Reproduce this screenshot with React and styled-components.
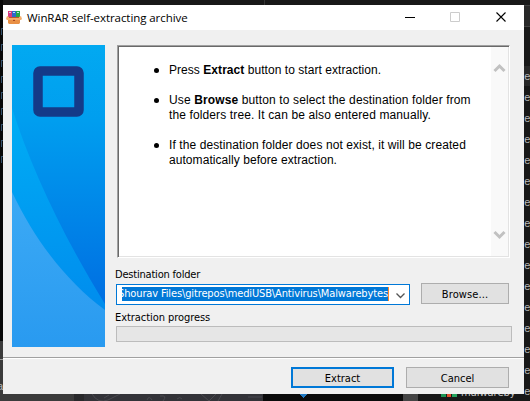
import React from 'react';
import styled, { createGlobalStyle } from 'styled-components';

const GlobalStyle = createGlobalStyle`
  * { box-sizing: border-box; }
  html, body { margin: 0; overflow: hidden; background: #181818; }
`;

const Desktop = styled.main`
  position: relative;
  width: 530px;
  height: 401px;
  overflow: hidden;
  padding: 5px 6px 7px 3px;
  background: #181818;
`;

const Backdrop = styled.svg`
  position: absolute;
  inset: 0;
`;

const Dialog = styled.section`
  position: relative;
  display: flex;
  flex-direction: column;
  width: 521px;
  height: 389px;
  background: #f0f0f0;
  color: #000;
  font: 11px/15px "DejaVu Sans Condensed", "Noto Sans", sans-serif;
`;

const TitleBar = styled.header`
  display: flex;
  align-items: center;
  height: 25px;
  padding-left: 3px;
  background: #fff;
`;

const Title = styled.h1`
  flex: 1;
  margin: 0 0 0 5px;
  font: 400 11.5px/24px "Open Sans", "Noto Sans", sans-serif;
  letter-spacing: ${(p) => p.$spacing}px;
  white-space: nowrap;
`;

const WindowControls = styled.svg`
  flex: none;
  width: 121px;
  height: 25px;
`;

const Content = styled.div`
  display: flex;
  height: 327px;
  padding: 15px 0 0 9px;
`;

const Banner = styled.svg`
  flex: none;
  width: 93px;
  height: 302px;
`;

const Main = styled.div`
  display: flex;
  flex-direction: column;
  margin-left: 11px;
  width: 398px;
`;

const TextPane = styled.div`
  display: flex;
  justify-content: space-between;
  width: 393px;
  height: 213px;
  margin-left: 1px;
  background: #fff;
  border: 1px solid;
  border-color: #a0a0a0 #fff #fff #a0a0a0;
  box-shadow: inset 1px 1px #696969, inset -1px -1px #e3e3e3;
`;

const Instructions = styled.ul`
  margin: 0;
  padding: 17px 0 0 51px;
  list-style: none;
  font: 12px/15px "Liberation Sans", Arial, sans-serif;
  white-space: nowrap;
`;

const Item = styled.li`
  display: flex;
  margin-bottom: 15px;
  &::before {
    content: "";
    width: 5px;
    height: 5px;
    margin: 5px 10px 0 -15px;
    border-radius: 50%;
    background: #000;
  }
`;

const Line = styled.span`
  display: block;
  letter-spacing: ${(p) => p.$spacing || 0}px;
`;

const ScrollBar = styled.svg`
  flex: none;
  width: 17px;
  height: 209px;
  margin: 1px;
`;

const Label = styled.label`
  height: 15px;
  margin-top: ${(p) => p.$top}px;
  letter-spacing: ${(p) => p.$spacing}px;
  white-space: nowrap;
  margin-left: -1px;
`;

const Row = styled.div`
  display: flex;
  margin-top: 1px;
`;

const Combo = styled.div`
  display: flex;
  width: 294px;
  height: 21px;
  margin: 1px 11px 0 0;
  padding: 2px 0 2px 5px;
  background: #fff;
  border: 1px solid #0078d7;
`;

const Selection = styled.span`
  display: flex;
  justify-content: flex-end;
  width: 267px;
  height: 14px;
  overflow: hidden;
  background: #0078d7;
  color: #fff;
  line-height: 14px;
  white-space: nowrap;
  letter-spacing: ${(p) => p.$spacing}px;
  border-right: 1px solid #ff8728;
`;

const Chevron = styled.svg`
  width: 19px;
  height: 17px;
`;

const Button = styled.button`
  width: ${(p) => p.$width}px;
  height: 21px;
  padding: 1px 0 0;
  border: ${(p) => (p.$primary ? '2px solid #0078d7' : '1px solid #adadad')};
  background: #e1e1e1;
  color: #000;
  font: inherit;
  letter-spacing: ${(p) => p.$spacing || 0}px;
`;

const Progress = styled.div`
  width: 396px;
  height: 16px;
  margin-top: 1px;
  background: #e6e6e6;
  border: 1px solid #bcbcbc;
`;

const Footer = styled.footer`
  display: flex;
  justify-content: flex-end;
  align-items: flex-start;
  gap: 12px;
  height: 37px;
  padding: 9px 15px 0 0;
  border-top: 1px solid #a0a0a0;
  box-shadow: inset 0 1px #fff;
`;

function Desk() {
  const rows = Array.from({ length: 16 }, (_, i) => 80 + i * 21);
  const marks = Array.from({ length: 9 }, (_, i) => 28 + i * 16);
  return (
    <Backdrop width="530" height="401" shapeRendering="crispEdges">
      <path d="M0 0H3V341H0Z" fill="#080808" />
      <path d="M0 341H74V401H0Z" fill="#3b3b3b" />
      <path d="M74 393H84V401H74Z" fill="#29292b" />
      <path d="M84 393H263V401H84Z" fill="#333338" />
      <path d="M263 393H403V401H263Z" fill="#0b0b0b" />
      <path d="M403 393H418V401H403Z" fill="#454545" />
      <path d="M524 5H530V26H524ZM524 66H530V86H524Z" fill="#282828" />
      <path d="M524 5.5H530M524 26.5H530" stroke="#414141" />
      <path d="M264 0V5" stroke="#343434" />
      {marks.map((y) => (
        <path key={y} d={`M1.5 ${y}v7M1 ${y + 0.5}h2`} stroke="#34506b" />
      ))}
      <path d="M0 359.5H3" stroke="#999" />
      <g fill="none" stroke="#49494e" shapeRendering="auto">
        <path d="M92 394Q98 404 108 400L120 394M104 398l5-3M147 400q2-5 5 0M160 396q8-1 3 5M177 399q3-3 5 0M201 394l8 7 7-7M222 394l-4 7M248 397h14" />
      </g>
      <path d="M299 394h8l-4 4z" fill="#217ac3" />
      <path d="M441 394h5v3h-5z" fill="#1d9555" />
      <path d="M447 394h4v3h-4z" fill="#e24e2c" />
      <path d="M452 394h5v3h-5z" fill="#25a45d" />
      <g fill="#b7b7b7" fontFamily="Liberation Mono, monospace" fontSize="11">
        {rows.map((y) => <text key={y} x="524" y={y}>e</text>)}
        <text x="-3" y="390">a</text>
      </g>
      <text x="461" y="396" fill="#c6c6c6" fontFamily="DejaVu Sans Condensed, sans-serif" fontSize="11">malwareby</text>
    </Backdrop>
  );
}

function ArchiveIcon() {
  return (
    <svg width="16" height="16" viewBox="0 0 16 16">
      <path d="M2 1h4v8H2z" fill="#d63b80" />
      <path d="M6 1h4v8H6z" fill="#2d69c9" />
      <path d="M10 1h4v8h-4z" fill="#24a646" />
      <path d="M3 2h2v1H3zM7 2h2v1H7zM11 2h2v1h-2z" fill="#bde2f4" />
      <path d="M1 7h14v2H1z" fill="#ad4a25" />
      <path d="M2 9h12v4l-1 1H3l-1-1z" fill="#e99045" />
      <path d="M0 9l1-3 2 1h10l2-1 1 3-1 1H9L8 9l-1 1H1z" fill="#f5ad6b" />
      <path d="M3 7h10v1H3z" fill="#b9582c" />
      <path d="M7 10h2v1H7z" fill="#a94620" />
    </svg>
  );
}

function BannerArt() {
  return (
    <Banner viewBox="0 0 93 302">
      <defs>
        <linearGradient id="back" x1="0" y1="0" x2="0" y2="1">
          <stop offset="0" stopColor="#02a9f1" />
          <stop offset=".25" stopColor="#009eef" />
          <stop offset=".85" stopColor="#006fe2" />
          <stop offset="1" stopColor="#006be0" />
        </linearGradient>
        <linearGradient id="middle" x1="0" y1="0" x2="0" y2="1">
          <stop stopColor="#00aef5" />
          <stop offset="1" stopColor="#0086ec" />
        </linearGradient>
        <linearGradient id="front" x1="0" y1="0" x2="0" y2="1">
          <stop stopColor="#3caaf5" />
          <stop offset="1" stopColor="#299af0" />
        </linearGradient>
      </defs>
      <path d="M0 0H93V302H0Z" fill="url(#back)" />
      <path d="M0 63C18 120 48 186 93 259V302H0Z" fill="url(#middle)" />
      <path d="M0 147C23 196 56 238 93 265V302H0Z" fill="url(#front)" />
      <rect x="26" y="26" width="41" height="41" rx="2" fill="none" stroke="#143a88" strokeWidth="9.5" strokeLinejoin="round" />
    </Banner>
  );
}

export default function App() {
  return (
    <>
      <GlobalStyle />
      <Desktop>
        <Desk />
        <Dialog>
          <TitleBar>
            <ArchiveIcon />
            <Title $spacing={-0.07}>WinRAR self-extracting archive</Title>
            <WindowControls viewBox="403 5 121 25" fill="none">
              <path d="M405 17.5h10" stroke="#000" />
              <path d="M450.5 12.5h9v9h-9z" stroke="#ccc" />
              <path d="M496.5 12.5l9 9m0-9l-9 9" stroke="#000" strokeWidth="1.1" />
            </WindowControls>
          </TitleBar>
          <Content>
            <BannerArt />
            <Main>
              <TextPane>
                <Instructions>
                  <Item><div><Line $spacing={0.05}>Press <b>Extract</b> button to start extraction.</Line></div></Item>
                  <Item><div>
                    <Line $spacing={0.125}>Use <b>Browse</b> button to select the destination folder from</Line>
                    <Line $spacing={0.12}>the folders tree. It can be also entered manually.</Line>
                  </div></Item>
                  <Item><div>
                    <Line $spacing={0.09}>If the destination folder does not exist, it will be created</Line>
                    <Line $spacing={0.06}>automatically before extraction.</Line>
                  </div></Item>
                </Instructions>
                <ScrollBar viewBox="0 0 17 209">
                  <path d="M0 0H17V209H0Z" fill="#f9f9f9" />
                  <path d="M3.5 24l5-5 5 5M3.5 185l5 5 5-5" fill="none" stroke="#c1c1c1" strokeWidth="3" />
                </ScrollBar>
              </TextPane>
              <Label $top={9} $spacing={-0.2}>Destination folder</Label>
              <Row>
                <Combo>
                  <Selection $spacing={-0.13}>Shourav Files\gitrepos\mediUSB\Antivirus\Malwarebytes</Selection>
                  <Chevron viewBox="0 0 19 17">
                    <path d="M7.5 6.5l4 4 4-4" fill="none" stroke="#555" strokeWidth="1.3" />
                  </Chevron>
                </Combo>
                <Button $width={88} $spacing={0.1}>Browse...</Button>
              </Row>
              <Label $top={5} $spacing={-0.06}>Extraction progress</Label>
              <Progress />
            </Main>
          </Content>
          <Footer>
            <Button $primary $width={103}>Extract</Button>
            <Button $width={103}>Cancel</Button>
          </Footer>
        </Dialog>
      </Desktop>
    </>
  );
}
